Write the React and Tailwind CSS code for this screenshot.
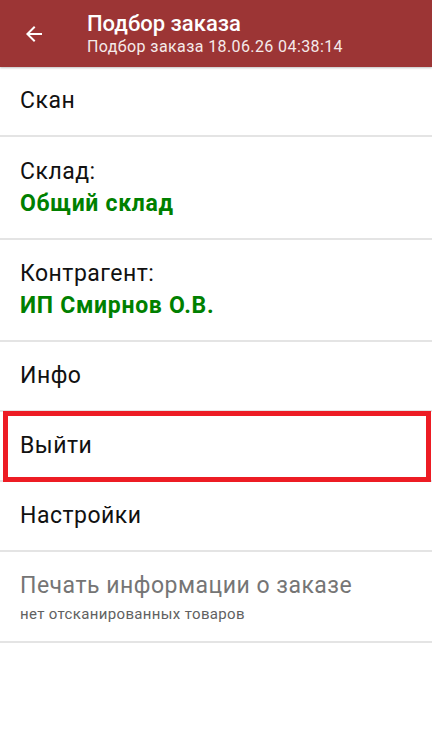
import React from 'react';

const menu = [
  { key: 'scan', title: 'Скан' },
  { key: 'stock', title: 'Склад:', value: 'Общий склад', h: 'h-[101px]' },
  { key: 'partner', title: 'Контрагент:', value: 'ИП Смирнов О.В.', h: 'h-[100px]' },
  { key: 'info', title: 'Инфо' },
  { key: 'exit', title: 'Выйти', marked: true },
  { key: 'settings', title: 'Настройки' },
  { key: 'print', title: 'Печать информации о заказе', hint: 'нет отсканированных товаров', disabled: true, h: 'h-[89px]' },
];

const BackArrow = () => (
  <svg width="24" height="24" viewBox="0 0 24 24" fill="white">
    <path d="M20 11H7.83l5.59-5.59L12 4l-8 8 8 8 1.41-1.41L7.83 13H20v-2z" />
  </svg>
);

const MenuRow = ({ item }) => (
  <div className="relative">
    <div className={`flex flex-col justify-center px-5 ${item.h || 'h-[68px]'}`}>
      <div className={`text-[23px] leading-[32px] tracking-[0.5px] ${item.disabled ? 'text-[#757575]' : 'text-[#111]'}`}>{item.title}</div>
      {item.value && <div className="text-[23px] leading-[32px] tracking-[0.7px] font-bold text-[#008000]">{item.value}</div>}
      {item.hint && <div className="text-[15px] leading-[20px] tracking-[0.35px] text-[#616161] mt-[2px]">{item.hint}</div>}
    </div>
    <div className="h-[2px] bg-[#e4e4e4]" />
    {item.marked && (
      <div className="absolute left-[3px] right-[1px] top-[-1px] bottom-0 border-[5px] border-[#ed1c24] pointer-events-none" />
    )}
  </div>
);

export default function App() {
  return (
    <div className="w-[432px] h-[739px] bg-white overflow-hidden" style={{ fontFamily: 'Roboto, "Noto Sans", sans-serif' }}>
      <header className="h-[67px] bg-[#9c3535] flex items-center shadow-[0_1px_2px_rgba(0,0,0,0.25)] relative z-10">
        <div className="w-[87px] pl-[22px] flex items-center">
          <BackArrow />
        </div>
        <div className="flex flex-col text-white">
          <div className="text-[22px] leading-[26px] font-medium">Подбор заказа</div>
          <div className="text-[16px] leading-[20px] tracking-[0.4px] text-[#f5eaea]">Подбор заказа 18.06.26 04:38:14</div>
        </div>
      </header>
      <div>
        {menu.map((item) => (
          <MenuRow key={item.key} item={item} />
        ))}
      </div>
    </div>
  );
}
